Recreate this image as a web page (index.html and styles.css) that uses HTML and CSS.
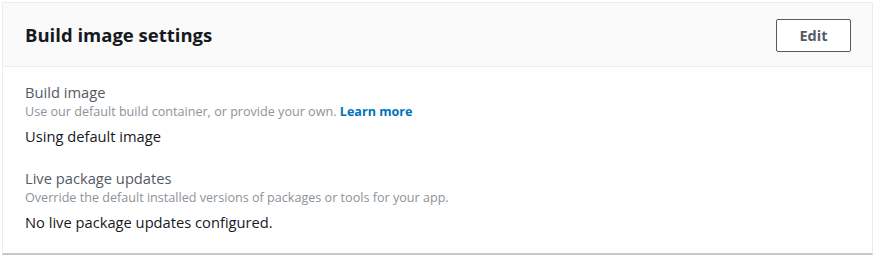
FILE: index.html
```html
<!DOCTYPE html>
<html lang="en">
<head>
    <meta charset="UTF-8">
    <meta name="viewport" content="width=device-width, initial-scale=1.0">
    <title>Build image settings</title>
    <link rel="stylesheet" href="styles.css">
</head>
<body>
    <div class="panel">
        <div class="panel-header">
            <h2>Build image settings</h2>
            <button class="btn">Edit</button>
        </div>
        <div class="panel-body">
            <div class="field">
                <div class="field-label">Build image</div>
                <div class="field-desc">Use our default build container, or provide your own. <a href="#">Learn more</a></div>
                <div class="field-value">Using default image</div>
            </div>
            <div class="field">
                <div class="field-label">Live package updates</div>
                <div class="field-desc">Override the default installed versions of packages or tools for your app.</div>
                <div class="field-value">No live package updates configured.</div>
            </div>
        </div>
    </div>
</body>
</html>
```

FILE: styles.css
```css
body {
    font-family: "Open Sans", "Liberation Sans", Arial, sans-serif;
    background-color: #fff;
    margin: 0;
    padding: 2px 4px 0 2px;
}
.panel {
    border: 1px solid #eaeded;
    border-bottom: 2px solid #c6c9cc;
    background-color: #fff;
}
.panel-header {
    display: flex;
    align-items: center;
    justify-content: space-between;
    height: 63px;
    padding: 0 21px 0 22px;
    background-color: #fafafa;
    border-bottom: 1px solid #eaeded;
}
h2 {
    margin: 0;
    font-size: 18.5px;
    font-weight: bold;
    color: #16191f;
}
.btn {
    width: 75px;
    height: 33px;
    border: 1px solid #545b64;
    border-radius: 2px;
    background-color: #fff;
    color: #545b64;
    font-family: inherit;
    font-size: 14.5px;
    font-weight: bold;
    margin-top: 2px;
}
.panel-body {
    padding: 15px 22px 21px;
}
.field + .field {
    margin-top: 22px;
}
.field-label {
    font-size: 14.7px;
    line-height: 20px;
    color: #545b64;
}
.field-desc {
    margin-top: 1px;
    font-size: 12.6px;
    line-height: 18px;
    color: #8d9399;
}
.field-desc a {
    color: #0073bb;
    font-weight: bold;
    text-decoration: none;
}
.field-value {
    margin-top: 5px;
    font-size: 14.7px;
    line-height: 20px;
    color: #16191f;
}
```
